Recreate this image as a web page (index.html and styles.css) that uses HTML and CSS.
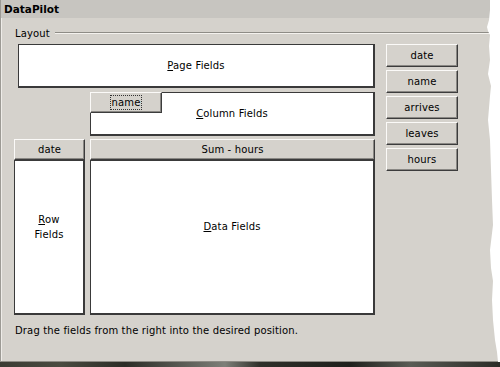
FILE: index.html
```html
<!DOCTYPE html>
<html>
<head>
<link rel="stylesheet" href="styles.css">
</head>
<body>
<div class="shot">
  <div class="dialog">
    <div class="title">DataPilot</div>
    <div class="legend"><span>Layout</span></div>
    <div class="content">
      <div class="layout">
        <div class="box page"><span><u>P</u>age Fields</span></div>
        <div class="box column">
          <div class="btn chip"><span class="focus">name</span></div>
          <span><u>C</u>olumn Fields</span>
        </div>
        <div class="btn head">date</div>
        <div class="btn head">Sum - hours</div>
        <div class="box rows"><span><u>R</u>ow<br>Fields</span></div>
        <div class="box data"><span><u>D</u>ata Fields</span></div>
      </div>
      <div class="fields">
        <div class="btn">date</div>
        <div class="btn">name</div>
        <div class="btn">arrives</div>
        <div class="btn">leaves</div>
        <div class="btn">hours</div>
      </div>
    </div>
    <p class="hint">Drag the fields from the right into the desired position.</p>
  </div>
  <svg class="torn" width="20" height="362" viewBox="0 0 20 362">
    <path d="M10 0 L10 10 L9 20 L7 27 L8 31 L10 35 L9 46 L10 60 L8 74 L11 86 L10 96 L8 120 L10 140 L11 170 L12 200 L13 225 L10 250 L11 268 L13 281 L12 300 L13 320 L15 340 L17 352 L18 362 L20 362 L20 0 Z" fill="#fff"/>
  </svg>
  <div class="ground"></div>
</div>
</body>
</html>
```

FILE: styles.css
```css
body {
  margin: 0;
  background: #fff;
  font-family: "DejaVu Sans", sans-serif;
  font-size: 10px;
  letter-spacing: 0.15px;
  color: #000;
}
.shot {
  position: relative;
  width: 500px;
  height: 367px;
  overflow: hidden;
}
.dialog {
  height: 361px;
  background: #d5d2cc;
  border-left: 1px solid #9c9a94;
  border-bottom: 1px solid #8e8c86;
  box-shadow: inset 1px 0 #eeece8;
}
.title {
  height: 18px;
  line-height: 18px;
  padding-left: 3px;
  background: #c7c5c0;
  font-weight: bold;
  font-size: 10.5px;
  letter-spacing: 0;
}
.legend {
  display: flex;
  align-items: center;
  height: 14px;
  margin: 8px 0 4px 14px;
}
.legend::after {
  content: "";
  flex: 1;
  margin-left: 5px;
  border-top: 1px solid #8e8c86;
  border-bottom: 1px solid #f4f2ee;
}
.content {
  display: flex;
  padding-left: 13px;
}
.layout {
  display: grid;
  grid-template-columns: 71px 285px;
  column-gap: 5px;
  width: 361px;
}
.box {
  display: flex;
  align-items: center;
  justify-content: center;
  text-align: center;
  background: #fff;
  border: 1px solid #3a3a3a;
  border-right-width: 2px;
  border-bottom-width: 2px;
  box-sizing: border-box;
}
.page {
  grid-column: 1 / 3;
  height: 44px;
  margin-left: 4px;
}
.column {
  grid-column: 2;
  position: relative;
  height: 44px;
  margin-top: 4px;
}
.rows, .data {
  height: 155px;
  padding-bottom: 21px;
  line-height: 15px;
}
.btn {
  display: flex;
  align-items: center;
  justify-content: center;
  box-sizing: border-box;
  background: #d5d2cc;
  border: 1px solid;
  border-color: #fbfaf8 #3c3c3c #3c3c3c #fbfaf8;
  box-shadow: inset -1px -1px #8a8884;
}
.head {
  height: 21px;
  margin-top: 3px;
}
.chip {
  position: absolute;
  left: -1px;
  top: -1px;
  width: 72px;
  height: 21px;
}
.focus {
  outline: 1px dotted #333;
  padding: 0 1px;
  line-height: 13px;
}
.fields {
  display: flex;
  flex-direction: column;
  gap: 3px;
  width: 72px;
  margin-left: 11px;
}
.fields .btn {
  height: 23px;
}
.hint {
  margin: 9px 0 0 14px;
  line-height: 14px;
}
u {
  text-underline-offset: 1px;
}
.torn {
  position: absolute;
  top: 0;
  right: 0;
}
.ground {
  height: 5px;
  background: linear-gradient(90deg, #3a3b33 0%, #4a4b40 12%, #2b2c26 25%, #7d7f78 45%, #2f302a 52%, #1f201c 70%, #5a5c55 82%, #2a2b26 100%);
}
```
